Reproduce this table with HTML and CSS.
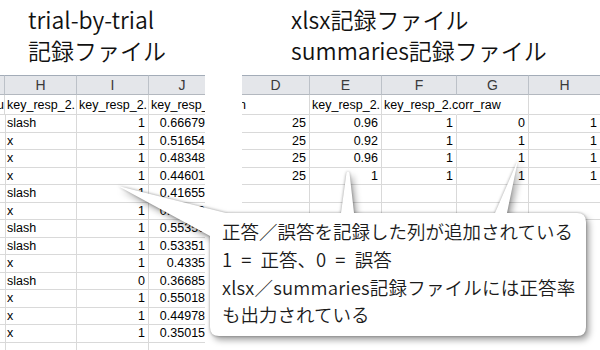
FILE: index.html
```html
<!DOCTYPE html>
<html lang="ja">
<head>
<meta charset="utf-8">
<title>記録ファイル</title>
<link rel="stylesheet" href="styles.css">
</head>
<body>
<div class="page">
  <div class="titles">
    <div class="title">trial-by-trial<br>記録ファイル</div>
    <div class="title">xlsx記録ファイル<br>summaries記録ファイル</div>
  </div>

  <div class="sheets">
    <div class="sheet sheet-left">
      <div class="grid grid-left">
        <div class="hd"></div><div class="hd">H</div><div class="hd">I</div><div class="hd">J</div>

        <div class="c end"><span>u</span></div><div class="c">key_resp_2.</div><div class="c">key_resp_2.</div><div class="c">key_resp_2.rt</div>

        <div class="c"></div><div class="c">slash</div><div class="c num">1</div><div class="c num">0.666795</div>
        <div class="c"></div><div class="c">x</div><div class="c num">1</div><div class="c num">0.516543</div>
        <div class="c"></div><div class="c">x</div><div class="c num">1</div><div class="c num">0.483486</div>
        <div class="c"></div><div class="c">x</div><div class="c num">1</div><div class="c num">0.446017</div>
        <div class="c"></div><div class="c">slash</div><div class="c num">1</div><div class="c num">0.416557</div>
        <div class="c"></div><div class="c">x</div><div class="c num">1</div><div class="c num">0.400295</div>
        <div class="c"></div><div class="c">slash</div><div class="c num">1</div><div class="c num">0.553502</div>
        <div class="c"></div><div class="c">slash</div><div class="c num">1</div><div class="c num">0.533517</div>
        <div class="c"></div><div class="c">x</div><div class="c num">1</div><div class="c num">0.43358</div>
        <div class="c"></div><div class="c">slash</div><div class="c num">0</div><div class="c num">0.366855</div>
        <div class="c"></div><div class="c">x</div><div class="c num">1</div><div class="c num">0.550186</div>
        <div class="c"></div><div class="c">x</div><div class="c num">1</div><div class="c num">0.449786</div>
        <div class="c"></div><div class="c">x</div><div class="c num">1</div><div class="c num">0.350155</div>
        <div class="c"></div><div class="c"></div><div class="c"></div><div class="c"></div>
      </div>
    </div>

    <div class="sheet sheet-right">
      <div class="grid grid-right">
        <div class="hd">D</div><div class="hd">E</div><div class="hd">F</div><div class="hd">G</div><div class="hd">H</div>

        <div class="c"><span class="cut">n</span></div><div class="c">key_resp_2.</div><div class="c spill">key_resp_2.corr_raw</div><div class="c"></div><div class="c"></div>

        <div class="c num">25</div><div class="c num">0.96</div><div class="c num">1</div><div class="c num">0</div><div class="c num">1</div>
        <div class="c num">25</div><div class="c num">0.92</div><div class="c num">1</div><div class="c num">1</div><div class="c num">1</div>
        <div class="c num">25</div><div class="c num">0.96</div><div class="c num">1</div><div class="c num">1</div><div class="c num">1</div>
        <div class="c num">25</div><div class="c num">1</div><div class="c num">1</div><div class="c num">1</div><div class="c num">1</div>
        <div class="c"></div><div class="c"></div><div class="c"></div><div class="c"></div><div class="c"></div>
        <div class="c"></div><div class="c"></div><div class="c"></div><div class="c"></div><div class="c"></div>
      </div>
    </div>
  </div>

  <svg class="callout-shape" width="600" height="350" viewBox="0 0 600 350" aria-hidden="true">
    <path d="M226 213 L341 213 L346.5 173 Q348 170 349.5 173 L354 213 L495 213 L518 160 L507 213 L577 213 Q586 213 586 222 L586 327 Q586 336 577 336 L219 336 Q210 336 210 327 L210 236 L118 186 Z" fill="#ffffff"/>
  </svg>

  <div class="callout-text">
    <p>正答／誤答を記録した列が追加されている</p>
    <p class="eq">1 = 正答、0 = 誤答</p>
    <p class="latin">xlsx／summaries記録ファイルには正答率</p>
    <p>も出力されている</p>
  </div>
</div>
</body>
</html>
```

FILE: styles.css
```css
* {
  box-sizing: border-box;
}

html, body {
  margin: 0;
  padding: 0;
  background: #ffffff;
}

.page {
  position: relative;
  width: 600px;
  height: 350px;
  overflow: hidden;
  background: #ffffff;
}

.titles {
  display: grid;
  grid-template-columns: 263px auto;
  height: 75px;
  padding: 4px 0 0 28px;
}

.title {
  font-family: "Noto Sans CJK JP", "Noto Sans", sans-serif;
  font-size: 23px;
  font-weight: 350;
  line-height: 31px;
  color: #111111;
  white-space: nowrap;
}

.sheets {
  display: flex;
  gap: 37px;
  height: 275px;
}

.sheet {
  overflow: hidden;
}

.sheet-left {
  width: 205px;
  flex: none;
}

.sheet-right {
  flex: 1;
}

.grid {
  display: grid;
  font-family: "Liberation Sans", Arial, sans-serif;
  font-size: 12.5px;
  color: #000000;
}

.grid-left {
  width: 216px;
  grid-template-columns: 5px 72px 72px 67px;
  grid-template-rows: 20px 20px repeat(14, 17.5px);
}

.grid-right {
  width: 359px;
  grid-template-columns: 68px 72px 75px 72px 72px;
  grid-template-rows: 20px 20px repeat(6, 17.5px);
}

.hd {
  background: #e4e6ea;
  border-top: 1px solid #a3acb8;
  border-bottom: 1px solid #b3b8bf;
  border-right: 1px solid #bcc1c8;
  text-align: center;
  font-size: 14px;
  line-height: 18px;
  color: #3a3a3a;
}

.c {
  border-right: 1px solid #d9d9d9;
  border-bottom: 1px solid #d9d9d9;
  padding: 0 3px 0 2px;
  white-space: nowrap;
  overflow: hidden;
  display: flex;
  align-items: center;
}

.num {
  justify-content: flex-end;
}

.end {
  justify-content: flex-end;
  padding: 0;
}

.cut {
  margin-left: -5px;
}

.spill {
  overflow: visible;
  border-right-color: transparent;
}

.callout-shape {
  position: absolute;
  top: 0;
  left: 0;
  pointer-events: none;
  filter: drop-shadow(0 0 1.5px rgba(0, 0, 0, 0.35)) drop-shadow(3px 4px 3px rgba(0, 0, 0, 0.35));
}

.callout-text {
  position: absolute;
  left: 222px;
  top: 218px;
  font-family: "Noto Sans CJK JP", "Noto Sans", sans-serif;
  font-size: 18.5px;
  font-weight: 350;
  line-height: 27.8px;
  color: #1a1a1a;
  white-space: nowrap;
}

.callout-text p {
  margin: 0;
}

.callout-text .eq {
  word-spacing: 5px;
}

.callout-text .latin {
  letter-spacing: 0.2px;
}
```
